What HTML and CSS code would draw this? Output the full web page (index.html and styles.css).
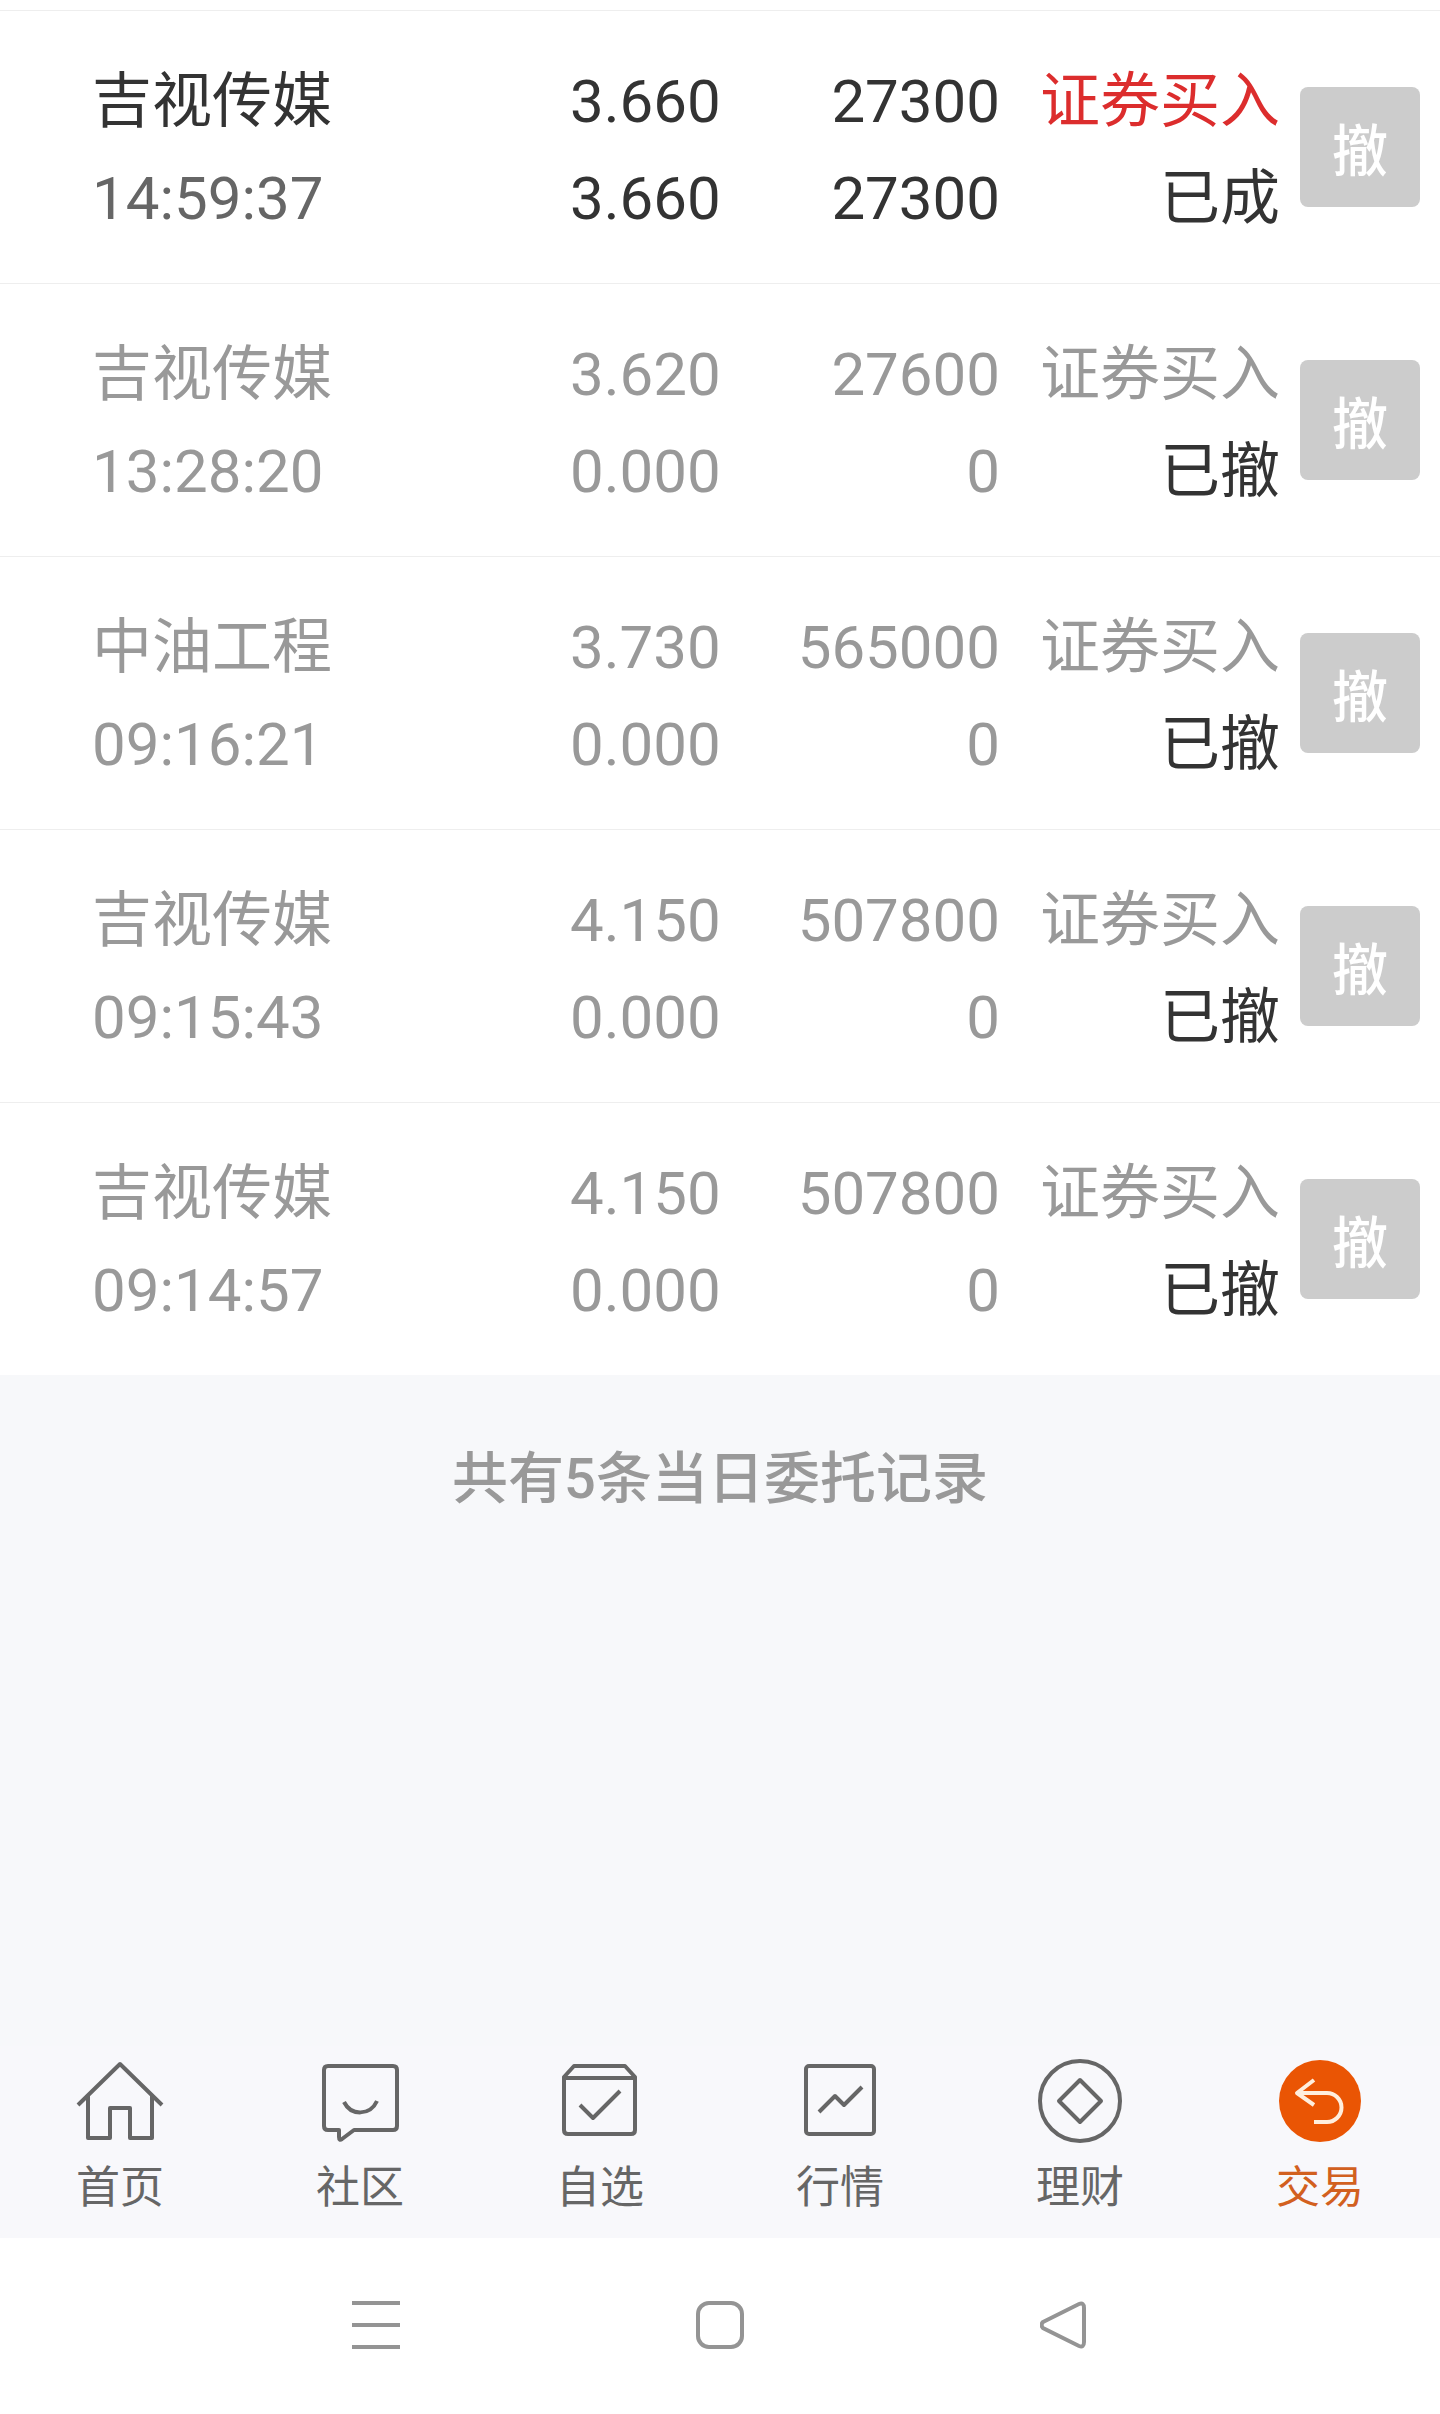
FILE: index.html
```html
<!DOCTYPE html>
<html lang="zh-CN">
<head>
  <meta charset="UTF-8">
  <meta name="viewport" content="width=device-width, initial-scale=1.0">
  <title>当日委托</title>
  <link rel="stylesheet" href="styles.css">
</head>
<body>
  <!-- 委托列表 -->
  <main class="content">
    <ul class="orders">
      <li class="order done">
        <div class="cell name"><span>吉视传媒</span><span class="time">14:59:37</span></div>
        <div class="cell price"><span>3.660</span><span>3.660</span></div>
        <div class="cell amount"><span>27300</span><span>27300</span></div>
        <div class="cell type"><span class="side">证券买入</span><span class="status">已成</span></div>
        <button class="cancel" type="button">撤</button>
      </li>
      <li class="order">
        <div class="cell name"><span>吉视传媒</span><span class="time">13:28:20</span></div>
        <div class="cell price"><span>3.620</span><span>0.000</span></div>
        <div class="cell amount"><span>27600</span><span>0</span></div>
        <div class="cell type"><span class="side">证券买入</span><span class="status">已撤</span></div>
        <button class="cancel" type="button">撤</button>
      </li>
      <li class="order">
        <div class="cell name"><span>中油工程</span><span class="time">09:16:21</span></div>
        <div class="cell price"><span>3.730</span><span>0.000</span></div>
        <div class="cell amount"><span>565000</span><span>0</span></div>
        <div class="cell type"><span class="side">证券买入</span><span class="status">已撤</span></div>
        <button class="cancel" type="button">撤</button>
      </li>
      <li class="order">
        <div class="cell name"><span>吉视传媒</span><span class="time">09:15:43</span></div>
        <div class="cell price"><span>4.150</span><span>0.000</span></div>
        <div class="cell amount"><span>507800</span><span>0</span></div>
        <div class="cell type"><span class="side">证券买入</span><span class="status">已撤</span></div>
        <button class="cancel" type="button">撤</button>
      </li>
      <li class="order">
        <div class="cell name"><span>吉视传媒</span><span class="time">09:14:57</span></div>
        <div class="cell price"><span>4.150</span><span>0.000</span></div>
        <div class="cell amount"><span>507800</span><span>0</span></div>
        <div class="cell type"><span class="side">证券买入</span><span class="status">已撤</span></div>
        <button class="cancel" type="button">撤</button>
      </li>
    </ul>
    <p class="summary">共有5条当日委托记录</p>
  </main>

  <!-- 底部导航 -->
  <nav class="tabs">
    <a class="tab" href="#home">
      <svg class="icon" viewBox="0 0 88 88" aria-hidden="true">
        <path d="M2 47 44 6l42 41M12 38v42h22V50h20v30h22V38"/>
      </svg>
      首页
    </a>
    <a class="tab" href="#community">
      <svg class="icon" viewBox="0 0 88 88" aria-hidden="true">
        <path d="M12 8h65q4 0 4 4v56q0 4-4 4H38L26 81q-3 2-3-2v-7H12q-4 0-4-4V12q0-4 4-4z"/>
        <path d="M28 44c7 14 26 14 33-1"/>
      </svg>
      社区
    </a>
    <a class="tab" href="#favorites">
      <svg class="icon" viewBox="0 0 88 88" aria-hidden="true">
        <path d="M8 19 18 8h51l10 11v53q0 4-4 4H12q-4 0-4-4zM8 20h71M24 47l13 13 27-27"/>
      </svg>
      自选
    </a>
    <a class="tab" href="#market">
      <svg class="icon" viewBox="0 0 88 88" aria-hidden="true">
        <rect x="10" y="8" width="68" height="68" rx="3"/>
        <path d="m23 54 16-16 9 9 18-18"/>
      </svg>
      行情
    </a>
    <a class="tab" href="#wealth">
      <svg class="icon" viewBox="0 0 88 88" aria-hidden="true">
        <circle cx="44" cy="43" r="40"/>
        <path d="m44 22 21 21-21 21-21-21z"/>
      </svg>
      理财
    </a>
    <a class="tab active" href="#trade">
      <svg class="icon" viewBox="0 0 88 88" aria-hidden="true">
        <circle class="disc" cx="44" cy="43" r="41"/>
        <path d="M38 22 21 35l17 12M21 35h30a14 14 0 0 1 0 29H38"/>
      </svg>
      交易
    </a>
  </nav>

  <!-- 系统按键 -->
  <footer class="system">
    <button class="key" type="button" aria-label="菜单">
      <svg viewBox="0 0 48 48"><path d="M0 2h48M0 24h48M0 46h48"/></svg>
    </button>
    <button class="key" type="button" aria-label="主屏幕">
      <svg viewBox="0 0 48 48"><rect x="2" y="2" width="44" height="44" rx="11"/></svg>
    </button>
    <button class="key" type="button" aria-label="返回">
      <svg viewBox="0 0 48 48"><path d="M3 21 39 3q5-2 5 4v34q0 6-5 4L3 27q-3-3 0-6z"/></svg>
    </button>
  </footer>
</body>
</html>
```

FILE: styles.css
```css
* {
  margin: 0;
  padding: 0;
  box-sizing: border-box;
}
body {
  display: flex;
  flex-direction: column;
  min-height: 100vh;
  background-color: #f7f8fa;
  color: #333;
  font-family: Roboto, "Noto Sans CJK SC", sans-serif;
  font-size: 60px;
}
button {
  border: none;
  background: none;
  font-family: inherit;
  cursor: pointer;
}
.content {
  flex: 1;
}
.orders {
  padding-top: 10px;
  background-color: #fff;
  list-style: none;
}
.order {
  display: grid;
  grid-template-columns: 5fr 4fr 4fr 300px 120px;
  align-items: center;
  height: 273px;
  padding: 0 20px 0 92px;
  border-top: 1px solid #eee;
  color: #999;
}
.cell {
  display: flex;
  flex-direction: column;
  padding-top: 6px;
  line-height: 97px;
}
.price,
.amount,
.type {
  text-align: right;
}
.type {
  padding-right: 20px;
}
.status {
  color: #333;
}
.done {
  color: #333;
}
.done .time {
  color: #666;
}
.done .side {
  color: #dc2d2d;
}
.cancel {
  height: 120px;
  padding-bottom: 2px;
  border-radius: 8px;
  background-color: #ccc;
  color: #fff;
  font-size: 56px;
  font-weight: 500;
}
.summary {
  padding-top: 62px;
  color: #999;
  font-size: 56px;
  font-weight: 500;
  line-height: 84px;
  text-align: center;
}

/* 底部导航 */
.tabs {
  display: flex;
  padding: 12px 0 18px;
  background-color: #f8f8fb;
}
.tab {
  flex: 1;
  display: flex;
  flex-direction: column;
  align-items: center;
  gap: 10px;
  color: #666;
  font-size: 44px;
  line-height: 64px;
  text-decoration: none;
}
.icon {
  width: 88px;
  height: 88px;
  fill: none;
  stroke: #666;
  stroke-width: 4;
  stroke-linejoin: round;
}
.active {
  color: #d2601f;
}
.active .icon {
  stroke: #ffeedd;
}
.active .disc {
  fill: #ea5504;
  stroke: none;
}

/* 系统按键 */
.system {
  display: flex;
  justify-content: center;
  height: 176px;
  background-color: #fff;
}
.key {
  width: 344px;
}
.key svg {
  width: 48px;
  height: 48px;
  fill: none;
  stroke: #949494;
  stroke-width: 4;
}
```
